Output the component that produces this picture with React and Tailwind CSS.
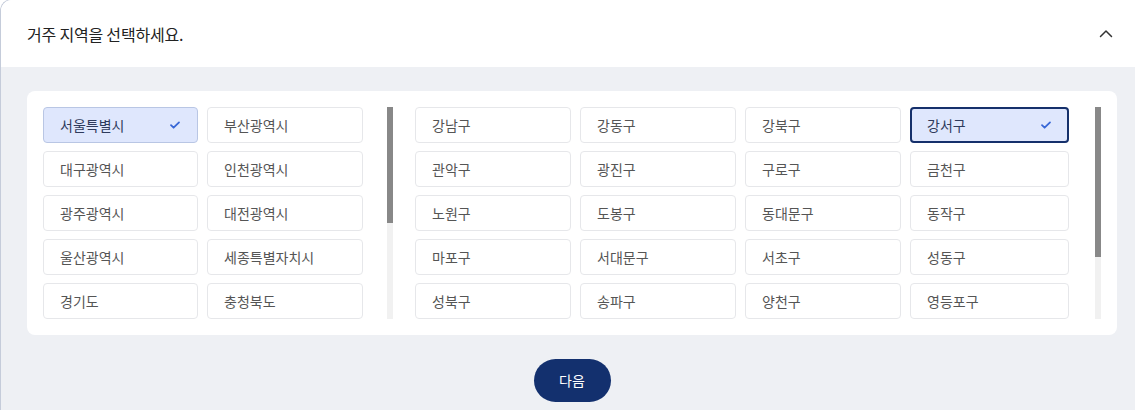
import { useState } from 'react';

const SIDO = [
  '서울특별시', '부산광역시',
  '대구광역시', '인천광역시',
  '광주광역시', '대전광역시',
  '울산광역시', '세종특별자치시',
  '경기도', '충청북도',
];

const GU = [
  '강남구', '강동구', '강북구', '강서구',
  '관악구', '광진구', '구로구', '금천구',
  '노원구', '도봉구', '동대문구', '동작구',
  '마포구', '서대문구', '서초구', '성동구',
  '성북구', '송파구', '양천구', '영등포구',
];

function Check() {
  return (
    <svg width="12" height="12" viewBox="0 0 12 12" fill="none">
      <path d="M2 6.2l2.6 2.5L10 3.4" stroke="#3867d6" strokeWidth="1.8" strokeLinecap="round" strokeLinejoin="round" />
    </svg>
  );
}

function Item({ label, selected, strong, onClick }) {
  return (
    <button
      onClick={onClick}
      className={`h-9 flex items-center justify-between pl-4 pr-4 rounded text-left text-[14px] ${
        selected
          ? strong
            ? 'bg-[#dfe7fd] border-2 border-[#15306b] text-[#2f3b5c] pl-[15px] pr-[15px]'
            : 'bg-[#dfe7fd] border border-[#b9c6e4] text-[#2f3b5c]'
          : 'bg-white border border-[#e6e7ea] text-[#555]'
      }`}>
      <span>{label}</span>
      {selected && <Check />}
    </button>
  );
}

function Scrollbar({ thumb }) {
  return (
    <div className="w-1.5 h-[212px] bg-[#f1f1f1] shrink-0">
      <div className={`w-full bg-[#888] ${thumb}`} />
    </div>
  );
}

export default function App() {
  const [sido, setSido] = useState('서울특별시');
  const [gu, setGu] = useState('강서구');

  return (
    <div className="w-[1135px] h-[410px] overflow-hidden bg-white" style={{ fontFamily: '"Noto Sans CJK KR", "Noto Sans", sans-serif' }}>
      <div className="w-[1160px] h-[420px] -mt-px border-l-[1.5px] border-t border-[#c5ccda] rounded-tl-xl overflow-hidden flex flex-col">
        <div className="h-[67px] shrink-0 flex items-center justify-between pl-[26px] pr-[46px] bg-white">
          <span className="text-[16px] text-[#222] tracking-[-0.2px]">거주 지역을 선택하세요.</span>
          <svg width="14" height="14" viewBox="0 0 14 14" fill="none" className="mr-[1px]">
            <path d="M1.5 9.5L7 4l5.5 5.5" stroke="#333" strokeWidth="1.5" strokeLinecap="round" strokeLinejoin="round" />
          </svg>
        </div>
        <div className="flex-1 bg-[#eef0f4] pt-6 pl-[26px]">
          <div className="w-[1090px] bg-white rounded-lg p-4 flex gap-[22px]">
            <div className="flex w-[350px]">
              <div className="grid grid-cols-[155px_156px] gap-x-[9px] gap-y-2 h-[212px] overflow-hidden content-start flex-1">
                {SIDO.map(s => (
                  <Item key={s} label={s} selected={sido === s} onClick={() => setSido(s)} />
                ))}
              </div>
              <Scrollbar thumb="h-[116px]" />
            </div>
            <div className="flex w-[686px]">
              <div className="grid grid-cols-[156px_156px_156px_159px] gap-x-[9px] gap-y-2 h-[212px] overflow-hidden content-start flex-1">
                {GU.map(g => (
                  <Item key={g} label={g} selected={gu === g} strong onClick={() => setGu(g)} />
                ))}
              </div>
              <Scrollbar thumb="h-[150px]" />
            </div>
          </div>
          <div className="w-[1090px] flex justify-center pt-6">
            <button className="w-[77px] h-[43px] rounded-full bg-[#13306e] text-white text-[14px]">다음</button>
          </div>
        </div>
      </div>
    </div>
  );
}
